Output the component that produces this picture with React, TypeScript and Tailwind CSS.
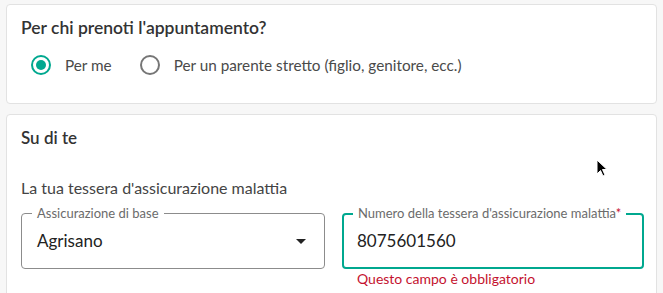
import React from "react";

function Radio({ checked, label }: { checked?: boolean; label: string }) {
  return (
    <label className="flex items-center gap-[14px]">
      <span
        className={
          checked
            ? "flex h-5 w-5 items-center justify-center rounded-full border-2 border-[#00a88f]"
            : "flex h-5 w-5 items-center justify-center rounded-full border-2 border-[#767676]"
        }
      >
        {checked && <span className="h-[10px] w-[10px] rounded-full bg-[#00a88f]" />}
      </span>
      <span className="text-[15.3px] leading-[22px] text-[#4a4a4a]">{label}</span>
    </label>
  );
}

export default function App() {
  return (
    <div className="relative h-[293px] w-[663px] overflow-hidden bg-[#f7f7f7] px-[6px] pt-[4px] font-['Lato',sans-serif]">
      <section className="h-[100px] rounded-[4px] border border-[#e2e2e2] bg-white px-[14px] pt-[11px]">
        <h2 className="text-[17.5px] font-semibold leading-[24px] text-[#333]">
          Per chi prenoti l'appuntamento?
        </h2>
        <div className="mt-[14px] flex items-center gap-[28px] pl-[10px]">
          <Radio checked label="Per me" />
          <Radio label="Per un parente stretto (figlio, genitore, ecc.)" />
        </div>
      </section>

      <section className="mt-[10px] h-[200px] rounded-[4px] border border-[#e2e2e2] bg-white px-[14px] pt-[11px]">
        <h2 className="text-[17px] font-semibold leading-[24px] text-[#333]">Su di te</h2>
        <p className="mt-[27px] text-[16px] leading-[22px] text-[#444]">
          La tua tessera d'assicurazione malattia
        </p>
        <div className="mt-[14px] flex gap-[17px]">
          <div className="relative h-[56px] w-[304px] shrink-0 rounded-[4px] border border-[#8c8c8c]">
            <span className="absolute -top-[9px] left-[10px] bg-white px-[5px] text-[13px] leading-[16px] text-[#6b6b6b]">
              Assicurazione di base
            </span>
            <div className="flex h-full items-center justify-between pl-[15px] pr-[18px]">
              <span className="text-[17px] text-[#222]">Agrisano</span>
              <svg width="10" height="5" viewBox="0 0 10 5">
                <path d="M0 0 L10 0 L5 5 Z" fill="#222" />
              </svg>
            </div>
          </div>
          <div className="w-[302px] shrink-0">
            <div className="relative h-[56px] rounded-[4px] border-2 border-[#00a88f]">
              <span className="absolute -top-[10px] left-[9px] bg-white px-[5px] text-[13px] leading-[16px] text-[#6b6b6b]">
                Numero della tessera d'assicurazione malattia
                <span className="text-[#c4122f]">*</span>
              </span>
              <div className="flex h-full items-center pl-[13px]">
                <span className="text-[17px] text-[#222]">8075601560</span>
              </div>
            </div>
            <p className="mt-[1px] pl-[15px] text-[14px] leading-[18px] text-[#c4122f]">
              Questo campo è obbligatorio
            </p>
          </div>
        </div>
      </section>

      <svg
        className="absolute left-[596px] top-[159px]"
        width="12"
        height="19"
        viewBox="0 0 12 19"
      >
        <path
          d="M1 1 L1 15 L4.5 11.5 L7 17 L9 16 L6.5 10.5 L11 10.5 Z"
          fill="#000"
          stroke="#fff"
          strokeWidth="1"
        />
      </svg>
    </div>
  );
}
